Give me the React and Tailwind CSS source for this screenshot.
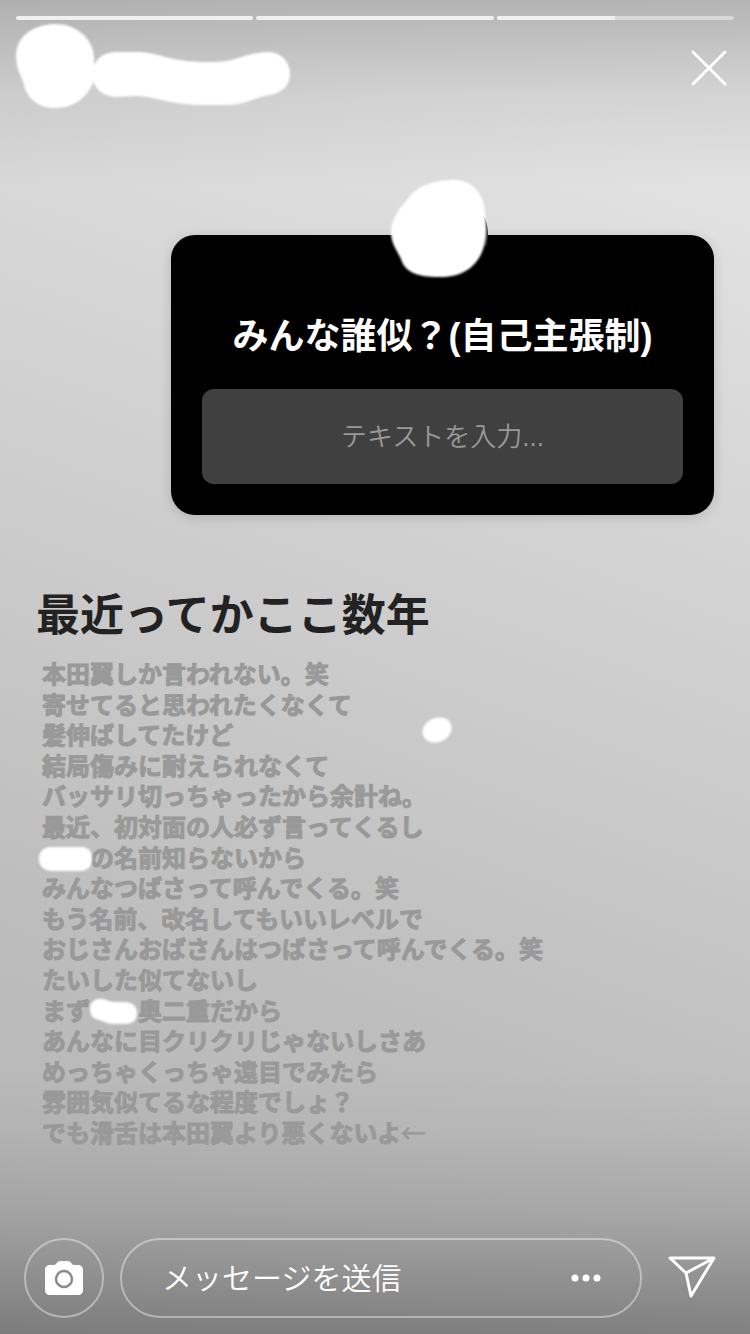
const segments = [100, 100, 50];

const storyLines = [
  { text: '本田翼しか言われない。笑' },
  { text: '寄せてると思われたくなくて' },
  { text: '髪伸ばしてたけど' },
  { text: '結局傷みに耐えられなくて' },
  { text: 'バッサリ切っちゃったから余計ね。' },
  { text: '最近、初対面の人必ず言ってくるし' },
  { hidden: 'pill', text: 'の名前知らないから' },
  { text: 'みんなつばさって呼んでくる。笑' },
  { text: 'もう名前、改名してもいいレベルで' },
  { text: 'おじさんおばさんはつばさって呼んでくる。笑' },
  { text: 'たいした似てないし' },
  { before: 'まず', hidden: 'smudge', text: '奥二重だから' },
  { text: 'あんなに目クリクリじゃないしさあ' },
  { text: 'めっちゃくっちゃ遠目でみたら' },
  { text: '雰囲気似てるな程度でしょ？' },
  { text: 'でも滑舌は本田翼より悪くないよ', arrow: '←' },
];

const Progress = () => (
  <div className="flex gap-[3px] px-4 pt-4">
    {segments.map((percent, i) => (
      <div key={i} className="h-1 flex-1 overflow-hidden rounded-full bg-[#d8d8d8]">
        <div className="h-full bg-[#f0f0f0]" style={{ width: `${percent}%` }} />
      </div>
    ))}
  </div>
);

const Header = () => (
  <header className="flex items-start justify-between pr-5 pl-3">
    <svg width="284" height="92" viewBox="12 20 284 92" className="blur-[1px]" fill="#fff" aria-hidden="true">
      <path d="M54 24C76 23 94 39 94 58C94 74 97 80 88 92C80 102 71 108 54 108C38 108 27 98 24 85C22 76 16 70 16 56C16 38 31 25 54 24Z" />
      <path d="M92 75C93 60 102 53 114 52L140 52C160 53 171 62 205 62C240 63 240 53 268 52C281 52 290 62 290 74C290 87 280 93 270 95C255 97 245 105 228 105L198 105C170 104 155 97 137 96L115 97C101 96 93 87 92 75Z" />
    </svg>
    <button type="button" aria-label="閉じる" className="mt-7">
      <svg width="42" height="42" viewBox="0 0 42 42" stroke="#fff" strokeWidth="3" strokeLinecap="round">
        <path d="M5 4L37 36M37 4L5 36" />
      </svg>
    </button>
  </header>
);

const QuestionCard = () => (
  <section className="relative mt-[123px] mr-9 ml-[171px] rounded-3xl bg-black px-[31px] pt-[82px] pb-[31px] shadow-[0_2px_12px_rgba(0,0,0,0.15)]">
    <svg
      width="108"
      height="108"
      viewBox="384 174 108 108"
      className="absolute -top-[61px] left-1/2 -ml-[59px]"
      aria-hidden="true"
    >
      <path d="M483 215C488 222 489 234 487 246L481 245Z" fill="#222" />
      <path
        className="blur-[1px]"
        d="M450 180C471 178 484 193 485 212C486 224 487 232 485 242C481 263 466 277 441 277C423 277 408 275 402 262C399 252 391 246 391 232C391 219 401 206 411 195C420 185 434 181 450 180Z"
        fill="#fff"
      />
    </svg>
    <h2 className="text-center text-4xl leading-10 font-bold text-white">みんな誰似？(自己主張制)</h2>
    <input
      type="text"
      aria-label="みんな誰似？(自己主張制)"
      placeholder="テキストを入力..."
      className="mt-8 block h-[95px] w-full rounded-xl bg-[#404040] pt-0.5 text-center text-[26px] font-[350] text-white placeholder:text-[#999]"
    />
  </section>
);

const HiddenName = ({ shape }) => (
  <svg width="48" height="30" viewBox="0 0 48 30" className="inline-block overflow-visible align-top blur-[1px]" fill="#fff" aria-hidden="true">
    {shape === 'pill' ? (
      <path d="M9 3H39C47 3 50 8 50 15C50 22 46 27 38 27H10C2 27 -3 22 -3 15C-3 8 1 3 9 3Z" />
    ) : (
      <path d="M8 2C15 1 18 5 25 5H35C43 5 47 10 47 16C47 23 43 27 35 27H24C16 27 14 24 9 23C3 22 0 18 0 12C0 6 3 3 8 2Z" />
    )}
  </svg>
);

const StoryText = () => (
  <section className="mt-[73px] mb-[89px] flex flex-1 flex-col">
    <h1 className="px-9 text-[44px] leading-[56px] font-bold text-[#222]">最近ってかここ数年</h1>
    <div className="relative mt-4 flex flex-1 flex-col justify-between px-[42px] text-2xl leading-[30px] font-bold text-[#999] [-webkit-text-stroke:1px_#999]">
      {storyLines.map((line) => (
        <p key={line.text}>
          {line.before}
          {line.hidden && <HiddenName shape={line.hidden} />}
          {line.text}
          {line.arrow && (
            <span className="font-['Noto_Sans_CJK_JP',sans-serif] leading-none font-light">{line.arrow}</span>
          )}
        </p>
      ))}
      <svg width="32" height="28" viewBox="0 0 32 28" className="absolute top-14 left-[421px] blur-[1px]" aria-hidden="true">
        <ellipse cx="16" cy="14" rx="15" ry="12" fill="#fff" transform="rotate(-25 16 14)" />
      </svg>
    </div>
  </section>
);

const Footer = () => (
  <footer className="flex items-center gap-4 pr-8 pb-4 pl-6">
    <button type="button" aria-label="カメラ" className="flex size-20 items-center justify-center rounded-full border-2 border-white/40">
      <svg width="40" height="36" viewBox="0 0 40 36">
        <path
          d="M12 4C13 2 15 1 17 1H23C25 1 27 2 28 4C29 5 30 5 32 5H34C37 5 39 7 39 10V30C39 33 37 35 34 35H6C3 35 1 33 1 30V10C1 7 3 5 6 5H8C10 5 11 5 12 4Z"
          fill="#fff"
        />
        <circle cx="20" cy="19" r="8" fill="none" stroke="#8c8c8c" strokeWidth="2.5" />
      </svg>
    </button>
    <div className="flex h-20 min-w-0 flex-1 items-center rounded-full border-2 border-white/40 pr-9 pl-10">
      <input
        type="text"
        aria-label="メッセージを送信"
        placeholder="メッセージを送信"
        className="min-w-0 flex-1 bg-transparent pt-0.5 text-3xl font-[350] text-white placeholder:text-white"
      />
      <button type="button" aria-label="その他">
        <svg width="36" height="12" viewBox="0 0 36 12" fill="#fff">
          <circle cx="7" cy="6" r="3.5" />
          <circle cx="18" cy="6" r="3.5" />
          <circle cx="29" cy="6" r="3.5" />
        </svg>
      </button>
    </div>
    <button type="button" aria-label="送信" className="ml-2">
      <svg width="52" height="48" viewBox="0 0 52 48" fill="none" stroke="#fff" strokeWidth="3" strokeLinejoin="round">
        <path d="M4 4H48L25 42L20 19ZM20 19L48 4" />
      </svg>
    </button>
  </footer>
);

const App = () => {
  return (
    <main className="flex min-h-screen flex-col bg-[linear-gradient(to_bottom,rgba(0,0,0,0.21)_0%,rgba(0,0,0,0.07)_7%,transparent_14%,transparent_80%,rgba(0,0,0,0.03)_85%,rgba(0,0,0,0.11)_91%,rgba(0,0,0,0.31)_100%),linear-gradient(200deg,#e5e5e5_0%,#e2e2e2_12%,#d5d5d5_33%,#c9c9c9_54%,#bdbdbd_73%,#b4b4b4_100%)] font-['Liberation_Sans','Noto_Sans_CJK_JP',sans-serif]">
      <Progress />
      <Header />
      <QuestionCard />
      <StoryText />
      <Footer />
    </main>
  );
};

export default App;
